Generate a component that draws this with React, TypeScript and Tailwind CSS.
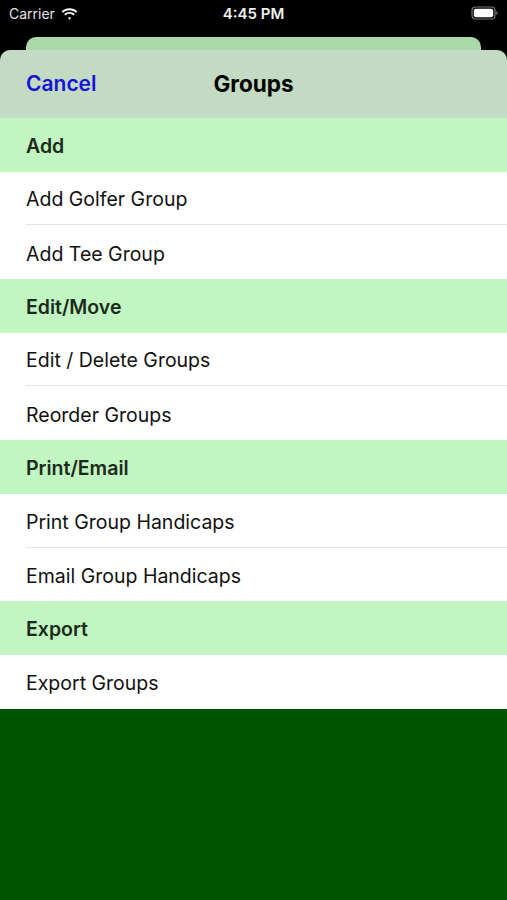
import React from "react";

const sections: { title: string; items: string[] }[] = [
  { title: "Add", items: ["Add Golfer Group", "Add Tee Group"] },
  { title: "Edit/Move", items: ["Edit / Delete Groups", "Reorder Groups"] },
  { title: "Print/Email", items: ["Print Group Handicaps", "Email Group Handicaps"] },
  { title: "Export", items: ["Export Groups"] },
];

const font = { fontFamily: "Inter, 'Liberation Sans', Arial, sans-serif" };

export default function App() {
  return (
    <div className="w-[507px] h-[900px] bg-black flex flex-col overflow-hidden" style={font}>
      {/* status bar */}
      <div className="h-[37px] relative flex items-start text-white shrink-0">
        <div className="flex items-center pl-[9px] pt-[5px] gap-[6px]">
          <span className="text-[14px] text-[#e6e6e6] leading-[18px]">Carrier</span>
          <svg width="17" height="13" viewBox="0 0 17 13">
            <path d="M8.5 2.2c2.5 0 4.8 1 6.5 2.6l1.3-1.4C14.2 1.4 11.5.2 8.5.2S2.8 1.4.7 3.4L2 4.8C3.7 3.2 6 2.2 8.5 2.2z" fill="#fff" />
            <path d="M8.5 5.8c1.5 0 2.9.6 4 1.6l1.3-1.4c-1.4-1.300-3.3-2.1-5.3-2.1S4.6 4.7 3.2 6l1.3 1.4c1.1-1 2.5-1.6 4-1.6z" fill="#fff" />
            <path d="M8.5 9.2c.6 0 1.2.2 1.6.6l-1.6 1.900-1.6-1.9c.4-.4 1-.6 1.6-.6z" fill="#fff" />
          </svg>
        </div>
        <div className="absolute left-0 right-0 top-[5px] text-center text-[15px] font-semibold leading-[18px] text-[#f0f0f0]">
          4:45 PM
        </div>
        <div className="absolute right-[9px] top-[6px]">
          <svg width="27" height="14" viewBox="0 0 27 14">
            <rect x="1" y="1" width="23" height="12" rx="3.5" fill="none" stroke="#777" strokeWidth="1.2" />
            <rect x="2.8" y="2.8" width="19.4" height="8.4" rx="2" fill="#fff" />
            <path d="M25.3 5v4c.8-.3 1.3-1 1.3-2s-.5-1.7-1.3-2z" fill="#777" />
          </svg>
        </div>
      </div>
      {/* back card */}
      <div className="h-[13px] mx-[26px] bg-[#acd9aa] rounded-t-[10px] shrink-0" />
      {/* sheet */}
      <div className="flex-1 flex flex-col rounded-t-[10px] overflow-hidden bg-[#005500]">
        <div className="h-[68px] bg-[#c2dbc2] flex items-center relative shrink-0">
          <span className="pl-[26px] text-[21px] font-semibold text-[#1414d9] pb-[1px]">Cancel</span>
          <span className="absolute left-0 right-0 text-center text-[22.5px] font-bold text-black pointer-events-none">
            Groups
          </span>
        </div>
        {sections.map((s) => (
          <div key={s.title} className="flex flex-col">
            <div className="h-[53.7px] bg-[#c1f5c1] flex items-center pl-[26px] pt-[4px] text-[19.5px] font-semibold text-[#1c2a1c]">
              {s.title}
            </div>
            {s.items.map((it, i) => (
              <div key={it} className="h-[53.7px] bg-white flex flex-col">
                <div className="flex-1 flex items-center pl-[26px] pt-[4px] text-[19.5px] text-[#111]">{it}</div>
                {i < s.items.length - 1 && <div className="h-px ml-[26px] bg-[#e2e2e2]" />}
              </div>
            ))}
          </div>
        ))}
      </div>
    </div>
  );
}
